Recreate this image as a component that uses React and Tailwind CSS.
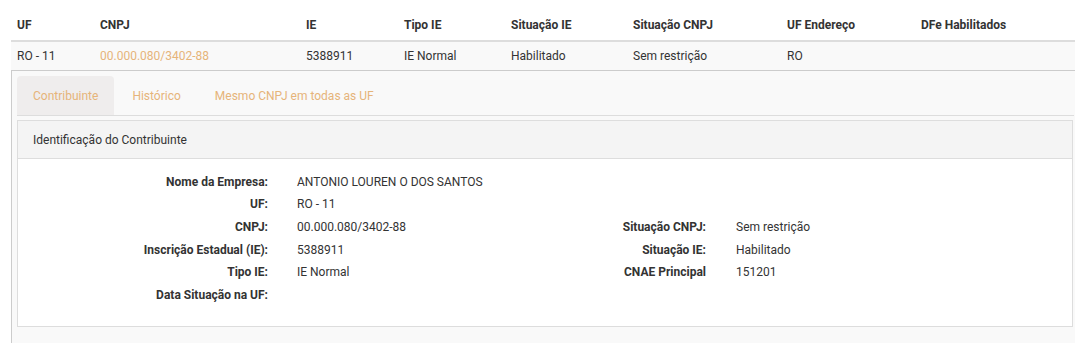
import React from "react";

const columns = [
  { label: "UF", width: "w-[83px]" },
  { label: "CNPJ", width: "w-[206px]" },
  { label: "IE", width: "w-[98px]" },
  { label: "Tipo IE", width: "w-[107px]" },
  { label: "Situação IE", width: "w-[122px]" },
  { label: "Situação CNPJ", width: "w-[154px]" },
  { label: "UF Endereço", width: "w-[134px]" },
  { label: "DFe Habilitados", width: "flex-1" },
];

const row = ["RO - 11", "00.000.080/3402-88", "5388911", "IE Normal", "Habilitado", "Sem restrição", "RO", ""];

// left column label/value, right column label/value
const details = [
  ["Nome da Empresa:", "ANTONIO LOUREN O DOS SANTOS", "", ""],
  ["UF:", "RO - 11", "", ""],
  ["CNPJ:", "00.000.080/3402-88", "Situação CNPJ:", "Sem restrição"],
  ["Inscrição Estadual (IE):", "5388911", "Situação IE:", "Habilitado"],
  ["Tipo IE:", "IE Normal", "CNAE Principal", "151201"],
  ["Data Situação na UF:", "", "", ""],
];

const tabs = ["Contribuinte", "Histórico", "Mesmo CNPJ em todas as UF"];

export default function App() {
  return (
    <div
      className="h-[343px] overflow-hidden bg-white pl-[11px] text-[12px] text-[#333]"
      style={{ fontFamily: "Roboto, 'Liberation Sans', sans-serif" }}
    >
      {/* Table header */}
      <div className="flex h-[40px] items-end pb-[6px]">
        {columns.map((c) => (
          <div key={c.label} className={`${c.width} px-[6px] font-bold leading-[17px]`}>
            {c.label}
          </div>
        ))}
      </div>

      {/* Data row */}
      <div className="flex h-[31px] items-center border-t-2 border-b border-t-[#dddddd] border-b-[#cccccc] bg-[#f9f9f9]">
        {columns.map((c, i) => (
          <div
            key={c.label}
            className={`${c.width} px-[6px] leading-[17px] ${i === 1 ? "text-[#e6b47a]" : ""}`}
          >
            {row[i]}
          </div>
        ))}
      </div>

      {/* Expanded details */}
      <div className="h-[300px] border-l border-[#cccccc] bg-[#f9f9f9] pl-[5px] pr-[1px] pt-[5px]">
        <div className="flex border-b border-[#dddddd]">
          {tabs.map((t, i) => (
            <div
              key={t}
              className={`mr-[2px] flex h-[39px] items-center rounded-t-[4px] px-[16px] text-[#e6b47a] ${
                i === 0 ? "bg-[#efeded]" : ""
              }`}
            >
              {t}
            </div>
          ))}
        </div>

        <div className="mr-[1px] mt-[4px] border border-[#dddddd] bg-white">
          <div className="flex h-[38px] items-center border-b border-[#dddddd] bg-[#f4f4f4] px-[15px]">
            Identificação do Contribuinte
          </div>
          <div className="pb-[19px] pt-[12px]">
            {details.map(([l1, v1, l2, v2]) => (
              <div key={l1} className="flex h-[22.6px] items-center leading-[17px]">
                <div className="w-[250px] text-right font-bold">{l1}</div>
                <div className="w-[288px] pl-[29px]">{v1}</div>
                <div className="w-[150px] text-right font-bold">{l2}</div>
                <div className="pl-[30px]">{v2}</div>
              </div>
            ))}
          </div>
        </div>
      </div>
    </div>
  );
}
